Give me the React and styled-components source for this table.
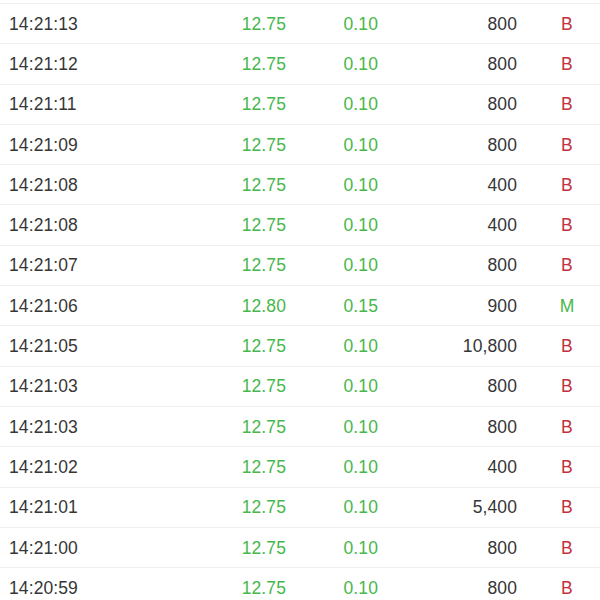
import React from "react";
import styled, { createGlobalStyle } from "styled-components";

const GlobalStyle = createGlobalStyle`
  body {
    margin: 0;
    background: #ffffff;
    font-family: "Liberation Sans", Arial, sans-serif;
  }
`;

const colors = {
  text: "#363636",
  up: "#47b74b",
  sell: "#c3323c",
  line: "#efefef",
};

const trades = [
  ["14:21:13", "12.75", "0.10", "800", "B"],
  ["14:21:12", "12.75", "0.10", "800", "B"],
  ["14:21:11", "12.75", "0.10", "800", "B"],
  ["14:21:09", "12.75", "0.10", "800", "B"],
  ["14:21:08", "12.75", "0.10", "400", "B"],
  ["14:21:08", "12.75", "0.10", "400", "B"],
  ["14:21:07", "12.75", "0.10", "800", "B"],
  ["14:21:06", "12.80", "0.15", "900", "M"],
  ["14:21:05", "12.75", "0.10", "10,800", "B"],
  ["14:21:03", "12.75", "0.10", "800", "B"],
  ["14:21:03", "12.75", "0.10", "800", "B"],
  ["14:21:02", "12.75", "0.10", "400", "B"],
  ["14:21:01", "12.75", "0.10", "5,400", "B"],
  ["14:21:00", "12.75", "0.10", "800", "B"],
  ["14:20:59", "12.75", "0.10", "800", "B"],
];

const TradeList = styled.div`
  padding-top: 3px;
  height: 600px;
  overflow: hidden;
`;

const TradeRow = styled.div`
  display: grid;
  grid-template-columns: 191px 86px 92px 139px 17px 66px;
  align-items: center;
  height: 40.3px;
  box-sizing: border-box;
  padding-left: 9px;
  padding-top: 1px;
  border-top: 1px solid ${colors.line};
  font-size: 17.5px;
  letter-spacing: 0.1px;
  color: ${colors.text};
`;

const Time = styled.span`
  text-align: left;
`;

const Num = styled.span`
  text-align: right;
  color: ${(props) => (props.up ? colors.up : colors.text)};
`;

const Flag = styled.span`
  grid-column: 6;
  text-align: center;
  color: ${(props) => (props.type === "B" ? colors.sell : colors.up)};
`;

const App = () => (
  <>
    <GlobalStyle />
    <TradeList>
      {trades.map(([time, price, change, volume, type], i) => (
        <TradeRow key={i}>
          <Time>{time}</Time>
          <Num up>{price}</Num>
          <Num up>{change}</Num>
          <Num>{volume}</Num>
          <Flag type={type}>{type}</Flag>
        </TradeRow>
      ))}
    </TradeList>
  </>
);

export default App;
